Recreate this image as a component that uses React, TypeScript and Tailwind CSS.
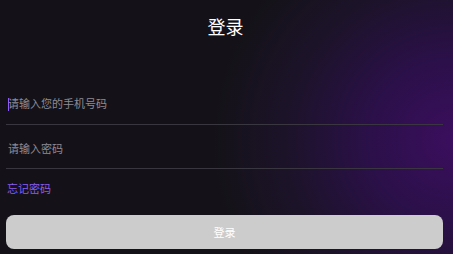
import { useState } from "react";

export default function App() {
  const [phone, setPhone] = useState("");
  const [password, setPassword] = useState("");

  return (
    <div
      className="relative w-[453px] h-[254px] overflow-hidden bg-[#141218] bg-[radial-gradient(ellipse_240px_230px_at_100%_55%,#3b0e5e_0%,#2b1049_35%,#1c1329_70%,#141218_100%)]"
      style={{ fontFamily: '"Noto Sans CJK SC", "Noto Sans", sans-serif' }}
    >
      <div className="flex flex-col pl-[6px] pr-[10px]">
        {/* Title */}
        <h1 className="text-center text-white text-[18px] leading-[26px] mt-[13px] pl-[2px]">
          登录
        </h1>

        {/* Phone input */}
        <div className="relative mt-[41px] border-b border-[#3a3640] h-[45px] flex items-center pt-[3px]">
          <span className="absolute left-[2px] top-[18px] w-[1px] h-[13px] bg-[#8b5cf6]" />
          <input
            value={phone}
            onChange={(e) => setPhone(e.target.value)}
            placeholder="请输入您的手机号码"
            className="w-full bg-transparent outline-none text-[11px] text-white placeholder:text-[#8e8a94] caret-transparent px-[2px]"
          />
        </div>

        {/* Password input */}
        <div className="border-b border-[#3a3640] h-[44px] flex items-center pt-[3px]">
          <input
            type="password"
            value={password}
            onChange={(e) => setPassword(e.target.value)}
            placeholder="请输入密码"
            className="w-full bg-transparent outline-none text-[11px] text-white placeholder:text-[#8e8a94] px-[2px]"
          />
        </div>

        <a className="mt-[11px] text-[11px] leading-[16px] text-[#8a5cf0] pl-[1px]">
          忘记密码
        </a>

        <button className="mt-[19px] h-[34px] w-full rounded-[8px] bg-[#cccccc] text-white text-[11px]">
          登录
        </button>
      </div>
    </div>
  );
}
